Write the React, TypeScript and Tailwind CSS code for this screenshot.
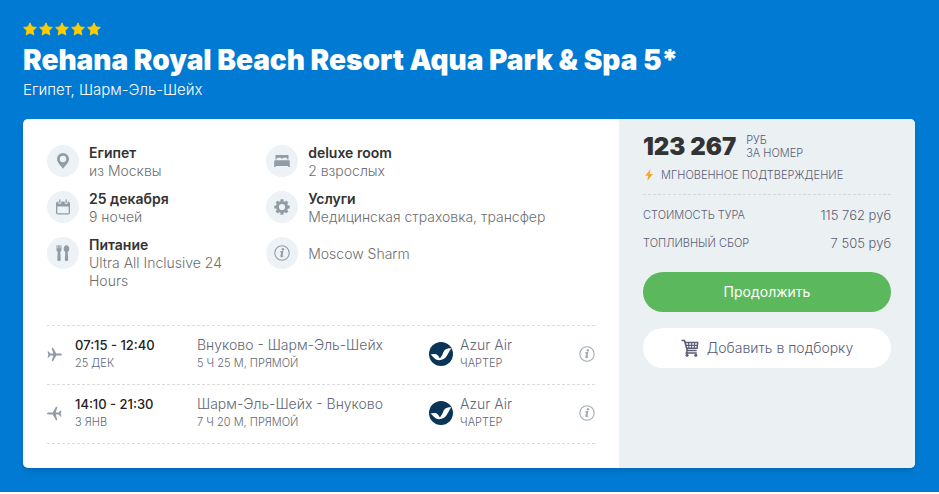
import type { ReactNode } from "react";

type InfoItem = {
  icon: ReactNode;
  title?: string;
  text: string;
};

type Flight = {
  direction: "there" | "back";
  time: string;
  date: string;
  route: string;
  duration: string;
};

const PinIcon = () => (
  <svg width="16" height="16" viewBox="0 0 16 16" fill="currentColor" aria-hidden="true">
    <path
      fillRule="evenodd"
      d="M8 0a6 6 0 0 1 6 6c0 3.200-3.600 6.600-6 9.800C5.600 12.600 2 9.200 2 6a6 6 0 0 1 6-6Zm0 2.800a3.200 3.200 0 1 0 0 6.400 3.200 3.200 0 0 0 0-6.400Z"
    />
  </svg>
);

const CalendarIcon = () => (
  <svg width="16" height="16" viewBox="0 0 16 16" aria-hidden="true">
    <path
      fill="currentColor"
      fillRule="evenodd"
      d="M3 2.500h.3v1a1.500 1.500 0 0 0 3 0v-1h3.400v1a1.500 1.500 0 0 0 3 0v-1h.3a2 2 0 0 1 2 2v9a2 2 0 0 1-2 2H3a2 2 0 0 1-2-2v-9a2 2 0 0 1 2-2Zm-.7 5v5.700c0 .6.400 1 1 1h9.400c.6 0 1-.4 1-1V7.500Z"
    />
    <path stroke="currentColor" strokeWidth="1.300" strokeLinecap="round" d="M4.800.8v2.600M11.200.8v2.600" />
  </svg>
);

const FoodIcon = () => (
  <svg width="16" height="16" viewBox="0 0 16 16" aria-hidden="true">
    <path fill="currentColor" d="M1.500.3h1v3h.7v-3h1.600v3h.7v-3h1V5c0 1-.6 1.500-1.200 1.700l.4 7.700a1.700 1.700 0 0 1-3.400 0l.4-7.700C2.100 6.500 1.500 6 1.500 5Z" />
    <path fill="currentColor" d="M11.500.3c1.600 0 2.800 1.600 2.800 3.600 0 1.400-.7 2.500-1.600 3l.5 7.500a1.700 1.700 0 0 1-3.400 0l.5-7.500c-.9-.5-1.600-1.600-1.600-3 0-2 1.200-3.600 2.800-3.600Z" />
  </svg>
);

const BedIcon = () => (
  <svg width="16" height="16" viewBox="0 0 16 16" fill="currentColor" aria-hidden="true">
    <path d="M1.500 2h13v4.600h-1.300V5.500c0-.5-.3-.8-.8-.8H9.600c-.5 0-.8.3-.8.8H7.200c0-.5-.3-.8-.8-.8H3.600c-.5 0-.8.3-.8.8v1.100H1.500Z" />
    <path d="M1.500 7.200h13c.8 0 1.300.5 1.300 1.300V14h-1.600v-.9H1.800v.9H.2V8.500c0-.8.500-1.300 1.300-1.300Z" />
  </svg>
);

const GearIcon = () => (
  <svg width="16" height="16" viewBox="0 0 16 16" aria-hidden="true">
    <g stroke="currentColor" strokeWidth="3">
      <path d="M8 .3v15.400M.3 8h15.400M2.600 2.600l10.800 10.800M13.400 2.600 2.600 13.400" />
    </g>
    <circle cx="8" cy="8" r="4.600" fill="#edf2f6" stroke="currentColor" strokeWidth="3" />
  </svg>
);

const InfoIcon = () => (
  <svg width="16" height="16" viewBox="0 0 16 16" fill="none" stroke="currentColor" aria-hidden="true">
    <circle cx="8" cy="8" r="7.200" strokeWidth="1.100" />
    <circle cx="8.900" cy="4.300" r="1.200" fill="currentColor" stroke="none" />
    <path d="M6.200 6.900 8.700 6.500 7.400 11.200c-.1.700.5.700 1.700-.4" strokeWidth="1.200" />
    <path d="M8.300 6.600 7.100 11.800" strokeWidth="1.800" />
  </svg>
);

const PlaneIcon = ({ back }: { back?: boolean }) => (
  <svg
    width="15"
    height="15"
    viewBox="0 0 15 15"
    fill="currentColor"
    className={back ? "-scale-x-100" : ""}
    aria-hidden="true"
  >
    <path d="M15 7.500c0 .6-.8 1-2 1H9.300L6 14.300H4.600L6.200 8.500H3.300L1.700 10.600H.5l.9-3.100L.5 4.400h1.200l1.600 2.100h2.900L4.600.7H6l3.300 5.800H13c1.200 0 2 .4 2 1Z" />
  </svg>
);

const StarIcon = () => (
  <svg width="14" height="14" viewBox="0 0 14 14" aria-hidden="true">
    <path
      fill="#ffcb05"
      stroke="#ffcb05"
      strokeWidth=".8"
      strokeLinejoin="round"
      d="m7 .8 1.900 4 4.500.6-3.300 3.100.8 4.500L7 10.900 3.100 13l.8-4.500L.6 5.400l4.500-.6Z"
    />
  </svg>
);

const BoltIcon = () => (
  <svg width="8" height="12" viewBox="0 0 8 12" fill="#f5a623" aria-hidden="true">
    <path d="M5.600 0 .2 6.700h3L2.300 12 7.800 5.100H4.700Z" />
  </svg>
);

const CartIcon = () => (
  <svg width="18" height="18" viewBox="0 0 18 18" fill="none" stroke="currentColor" aria-hidden="true">
    <path d="M.5 1.500h3l2.800 10h9.400" strokeWidth="1.700" />
    <path d="M4 3.500h12.700l-.6 5.800H5.600M6 14h9.800" strokeWidth="1.400" />
    <path d="M4.800 6.400h11.600M7.500 3.500l.5 6M10.600 3.500v6M13.600 3.500l-.3 6" strokeWidth="1.100" />
    <path d="M6.200 11.500 5.200 14h2" strokeWidth="1.300" />
    <circle cx="6" cy="16.200" r="1.500" fill="currentColor" stroke="none" />
    <circle cx="14.800" cy="16.200" r="1.500" fill="currentColor" stroke="none" />
  </svg>
);

const AzurAirLogo = () => (
  <svg width="24" height="24" viewBox="0 0 24 24" className="shrink-0" aria-hidden="true">
    <circle cx="12" cy="12" r="12" fill="#0a3556" />
    <path fill="#fff" d="M1.500 12.400c1.800-.6 4.200-.7 5.700-.1 1.700.7 2.500 2 3.300 3.700l2.300 1.800c-2.900.7-5.300.4-7.100-1.300-1.500-1.400-2.500-3-4.200-4.100Z" />
    <path fill="#fff" d="M22.500 6.200c-1.300 1.300-1.900 2.700-2.900 4.500-1.300 2.300-2.700 4.800-4.600 6.100-1.400 1-2.900 1.200-4.500 1 .2-1.600 1.700-3.100 2.700-4.900 1-1.700 1.300-3.600 2.600-4.900 1.600-1.600 3.900-2 6.700-1.800Z" />
  </svg>
);

const infoItems: InfoItem[] = [
  { icon: <PinIcon />, title: "Египет", text: "из Москвы" },
  { icon: <BedIcon />, title: "deluxe room", text: "2 взрослых" },
  { icon: <CalendarIcon />, title: "25 декабря", text: "9 ночей" },
  { icon: <GearIcon />, title: "Услуги", text: "Медицинская страховка, трансфер" },
  { icon: <FoodIcon />, title: "Питание", text: "Ultra All Inclusive 24 Hours" },
  { icon: <InfoIcon />, text: "Moscow Sharm" },
];

const flights: Flight[] = [
  {
    direction: "there",
    time: "07:15 - 12:40",
    date: "25 дек",
    route: "Внуково - Шарм-Эль-Шейх",
    duration: "5 ч 25 м, прямой",
  },
  {
    direction: "back",
    time: "14:10 - 21:30",
    date: "3 янв",
    route: "Шарм-Эль-Шейх - Внуково",
    duration: "7 ч 20 м, прямой",
  },
];

const prices = [
  { label: "Стоимость тура", value: "115 762 руб" },
  { label: "Топливный сбор", value: "7 505 руб" },
];

function InfoCell({ icon, title, text }: InfoItem) {
  return (
    <div className="flex items-start gap-2.5 pr-6 last:pr-0">
      <span className="mt-px flex size-8 shrink-0 items-center justify-center rounded-full bg-[#edf2f6] text-[#929ca6]">
        {icon}
      </span>
      <div className="flex min-h-9 flex-col justify-center">
        {title && <h3 className="font-semibold text-[#333]">{title}</h3>}
        <p className="font-light text-[#6f6f6f]">{text}</p>
      </div>
    </div>
  );
}

function FlightRow({ direction, time, date, route, duration }: Flight) {
  return (
    <li className="grid grid-cols-[28px_122fr_232fr_150fr_16px] items-center border-b border-dashed border-[#dcdcdc] pt-2.5 pb-3 font-light text-[#5f6876]">
      <span className="text-[#929ca6]">
        <PlaneIcon back={direction === "back"} />
      </span>
      <div>
        <p className="text-[13px] font-medium text-[#222]">{time}</p>
        <p className="text-[11px] uppercase">{date}</p>
      </div>
      <div>
        <p>{route}</p>
        <p className="text-[11px] uppercase">{duration}</p>
      </div>
      <div className="flex items-center gap-[7px]">
        <AzurAirLogo />
        <div>
          <p>Azur Air</p>
          <p className="text-[11px] uppercase">чартер</p>
        </div>
      </div>
      <button type="button" aria-label="Информация о рейсе" className="text-[#a3abb5]">
        <InfoIcon />
      </button>
    </li>
  );
}

export default function App() {
  return (
    <div className="bg-[#007ad3] pt-[22px] pr-6 pb-6 pl-[23px] font-['Inter','Noto_Sans',sans-serif] text-sm leading-[18px]">
      <header className="text-white">
        <div className="flex gap-0.5" role="img" aria-label="5">
          {[1, 2, 3, 4, 5].map((star) => (
            <StarIcon key={star} />
          ))}
        </div>
        <h1 className="mt-2 text-[28px] leading-8 font-black">
          Rehana Royal Beach Resort Aqua Park &amp; Spa 5*
        </h1>
        <p className="mt-1 text-[15px] leading-5 font-light">Египет, Шарм-Эль-Шейх</p>
      </header>

      <main className="mt-[19px] flex overflow-hidden rounded-[5px] bg-white shadow-md">
        <section className="flex-1 px-6 pt-[25px] pb-6">
          <div className="grid grid-cols-[2fr_3fr] gap-y-2.5">
            {infoItems.map((item) => (
              <InfoCell key={item.text} {...item} />
            ))}
          </div>
          <ul className="mt-[35px] border-t border-dashed border-[#dcdcdc]">
            {flights.map((flight) => (
              <FlightRow key={flight.direction} {...flight} />
            ))}
          </ul>
        </section>

        <aside className="w-1/3 max-w-[296px] bg-[#ebf0f3] px-6 pt-3 font-light text-[#5a5d75]">
          <div className="flex items-center gap-2.5">
            <strong className="text-2xl leading-8 font-black text-[#333]">123 267</strong>
            <div className="text-[11px] leading-[13px] uppercase">
              <p>руб</p>
              <p>за номер</p>
            </div>
          </div>
          <p className="mt-[3px] flex items-center gap-2 pl-0.5 text-[11px] uppercase">
            <BoltIcon />
            Мгновенное подтверждение
          </p>
          <dl className="mt-2.5 flex flex-col gap-2.5 border-t border-dashed border-[#d5d9de] pt-[11px]">
            {prices.map(({ label, value }) => (
              <div key={label} className="flex items-center justify-between">
                <dt className="text-[11px] uppercase">{label}</dt>
                <dd className="text-[13px]">{value}</dd>
              </div>
            ))}
          </dl>
          <button type="button" className="mt-5 h-10 w-full rounded-full bg-[#5cb85c] font-normal text-white">
            Продолжить
          </button>
          <button
            type="button"
            className="mt-4 flex h-10 w-full items-center justify-center gap-2 rounded-full bg-white"
          >
            <CartIcon />
            Добавить в подборку
          </button>
        </aside>
      </main>
    </div>
  );
}
